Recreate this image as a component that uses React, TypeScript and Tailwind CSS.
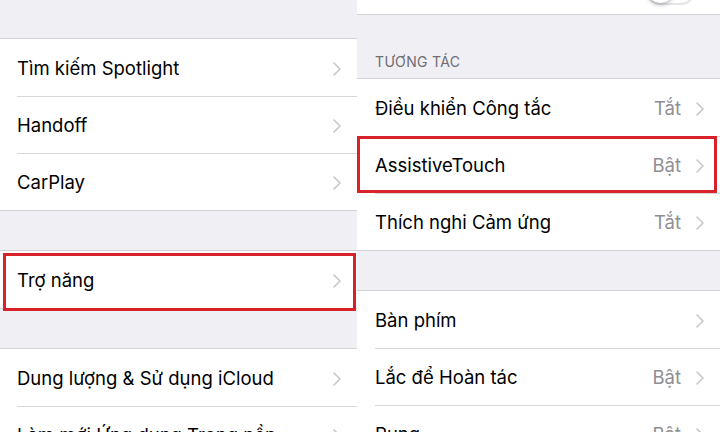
import React from 'react';

type Row = { label: string; value?: string; boxed?: boolean };

function Chevron() {
  return (
    <svg width="8" height="14" viewBox="0 0 8 14" className="shrink-0">
      <path d="M1 1l6 6-6 6" fill="none" stroke="#c7c7cc" strokeWidth="1.6" strokeLinecap="round" strokeLinejoin="round" />
    </svg>
  );
}

function Group({ rows, pl, box }: { rows: Row[]; pl: string; box: string }) {
  return (
    <div className="bg-white border-y border-[#d1d1d6]">
      {rows.map((r, i) => (
        <div key={r.label} className="relative">
          <div className={pl}>
            <div
              className={`h-[57px] flex items-center pt-[2px] pr-[16px] ${
                i > 0 ? 'border-t border-[#d8d8dc]' : ''
              }`}
            >
              <span className="flex-1 text-[18.5px] text-black whitespace-nowrap">{r.label}</span>
              {r.value && <span className="text-[18.5px] text-[#8e8e93] mr-[15px]">{r.value}</span>}
              <Chevron />
            </div>
          </div>
          {r.boxed && <div className={`absolute border-[3px] border-[#d7222c] ${box}`} />}
        </div>
      ))}
    </div>
  );
}

export default function App() {
  return (
    <div
      className="w-[720px] h-[432px] overflow-hidden flex bg-[#efeff4]"
      style={{ fontFamily: 'Inter, "Noto Sans", sans-serif' }}
    >
      {/* left column */}
      <div className="w-[357px] shrink-0 flex flex-col">
        <div className="h-[38px] shrink-0" />
        <Group
          pl="pl-[17px]"
          box=""
          rows={[{ label: 'Tìm kiếm Spotlight' }, { label: 'Handoff' }, { label: 'CarPlay' }]}
        />
        <div className="h-[39px] shrink-0" />
        <Group
          pl="pl-[17px]"
          box="left-[3px] right-[1px] top-[2px] bottom-[-3px]"
          rows={[{ label: 'Trợ năng', boxed: true }]}
        />
        <div className="h-[39px] shrink-0" />
        <Group
          pl="pl-[17px]"
          box=""
          rows={[{ label: 'Dung lượng & Sử dụng iCloud' }, { label: 'Làm mới Ứng dụng Trong nền' }]}
        />
      </div>

      {/* right column */}
      <div className="flex-1 flex flex-col">
        <div className="h-[15px] shrink-0 bg-white border-b border-[#d1d1d6] overflow-hidden flex justify-end items-end pr-[24px]">
          <div className="w-[51px] h-[31px] shrink-0 mb-[9px] rounded-full border-2 border-[#e5e5ea] bg-white flex items-center">
            <div className="w-[27px] h-[27px] rounded-full bg-white shadow-[0_2px_4px_rgba(0,0,0,0.25)]" />
          </div>
        </div>
        <div className="h-[63px] shrink-0 flex items-end pl-[18px] pb-[6px]">
          <span className="text-[14px] text-[#6d6d72] tracking-wide">TƯƠNG TÁC</span>
        </div>
        <Group
          pl="pl-[18px]"
          box="left-[0px] right-[3px] top-[0px] bottom-[0px]"
          rows={[
            { label: 'Điều khiển Công tắc', value: 'Tắt' },
            { label: 'AssistiveTouch', value: 'Bật', boxed: true },
            { label: 'Thích nghi Cảm ứng', value: 'Tắt' },
          ]}
        />
        <div className="h-[39px] shrink-0" />
        <Group
          pl="pl-[18px]"
          box=""
          rows={[
            { label: 'Bàn phím' },
            { label: 'Lắc để Hoàn tác', value: 'Bật' },
            { label: 'Rung', value: 'Bật' },
          ]}
        />
      </div>
    </div>
  );
}
